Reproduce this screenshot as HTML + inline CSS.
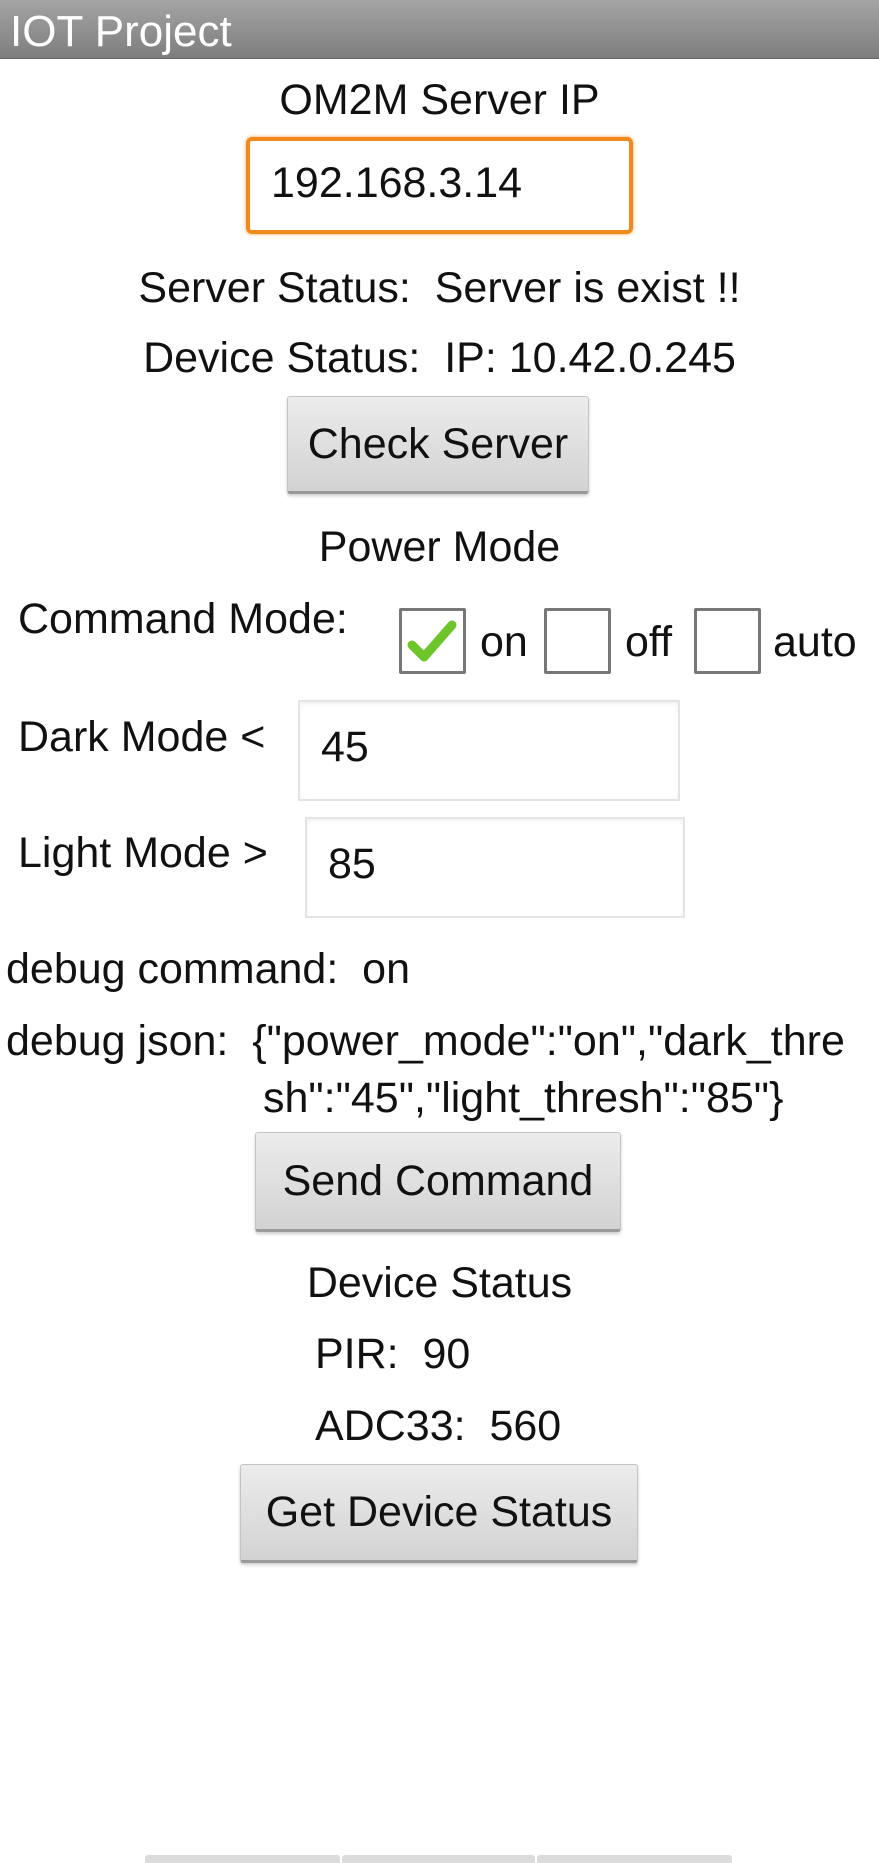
<!DOCTYPE html>
<html><head><meta charset="utf-8"><style>
*{margin:0;padding:0;box-sizing:border-box}
body{width:879px;height:1863px;background:#fff;position:relative;overflow:hidden;font-family:"Liberation Sans",sans-serif;color:#111;}
.t{position:absolute;font-size:43px;line-height:50px;white-space:nowrap}
.c{left:0;width:879px;text-align:center}
.bar{position:absolute;left:0;top:0;width:879px;height:59px;background:linear-gradient(#a4a4a4,#7e7e7e);border-bottom:1px solid #666}
.bar span{position:absolute;left:10px;top:7px;font-size:44px;color:#fff;line-height:50px}
.btn{position:absolute;background:linear-gradient(#ececec,#d2d2d2);border:1px solid #c4c4c4;border-bottom:3px solid #9a9a9a;border-radius:3px;box-shadow:0 2px 3px rgba(0,0,0,.2);font-size:43px;text-align:center;white-space:nowrap}
.in{position:absolute;border:2px solid #e4e4e4;background:#fff;box-shadow:inset 0 2px 4px rgba(0,0,0,.06)}
.cb{position:absolute;width:67px;height:66px;border:3px solid #777;background:#fff;border-radius:2px}
.nav{position:absolute;top:1855px;height:8px;background:#dcdcdc;border-radius:3px 3px 0 0}
</style></head><body>
<div class="bar"><span>IOT Project</span></div>
<div class="t c" style="top:75px">OM2M Server IP</div>
<div style="position:absolute;left:246px;top:137px;width:387px;height:97px;border:4px solid #f08a1c;border-radius:6px;box-shadow:0 0 3px #f5a040"></div>
<div class="t" style="left:271px;top:158px">192.168.3.14</div>
<div class="t c" style="top:263px">Server Status:&nbsp; Server is exist !!</div>
<div class="t c" style="top:333px">Device Status:&nbsp; IP: 10.42.0.245</div>
<div class="btn" style="left:287px;top:396px;width:302px;height:98px;line-height:94px">Check Server</div>
<div class="t c" style="top:522px">Power Mode</div>
<div class="t" style="left:18px;top:594px">Command Mode:</div>
<div class="cb" style="left:399px;top:608px"><svg width="61" height="60" viewBox="0 0 61 60"><path d="M10 34 L22 46 L50 14" fill="none" stroke="#6cc62a" stroke-width="9" stroke-linecap="round" stroke-linejoin="round"/></svg></div>
<div class="t" style="left:480px;top:617px">on</div>
<div class="cb" style="left:544px;top:608px"></div>
<div class="t" style="left:625px;top:617px">off</div>
<div class="cb" style="left:694px;top:608px"></div>
<div class="t" style="left:773px;top:617px">auto</div>
<div class="t" style="left:18px;top:712px">Dark Mode &lt;</div>
<div class="in" style="left:298px;top:700px;width:382px;height:101px"></div>
<div class="t" style="left:321px;top:722px">45</div>
<div class="t" style="left:18px;top:828px">Light Mode &gt;</div>
<div class="in" style="left:305px;top:817px;width:380px;height:101px"></div>
<div class="t" style="left:328px;top:839px">85</div>
<div class="t" style="left:6px;top:944px">debug command:&nbsp; on</div>
<div class="t" style="left:6px;top:1016px">debug json:&nbsp; {"power_mode":"on","dark_thre</div>
<div class="t" style="left:263px;top:1073px">sh":"45","light_thresh":"85"}</div>
<div class="btn" style="left:255px;top:1132px;width:366px;height:100px;line-height:96px">Send Command</div>
<div class="t c" style="top:1258px">Device Status</div>
<div class="t" style="left:315px;top:1329px">PIR:&nbsp; 90</div>
<div class="t" style="left:315px;top:1401px">ADC33:&nbsp; 560</div>
<div class="btn" style="left:240px;top:1464px;width:398px;height:99px;line-height:95px">Get Device Status</div>
<div class="nav" style="left:145px;width:195px"></div>
<div class="nav" style="left:342px;width:193px"></div>
<div class="nav" style="left:537px;width:195px"></div>
</body></html>
